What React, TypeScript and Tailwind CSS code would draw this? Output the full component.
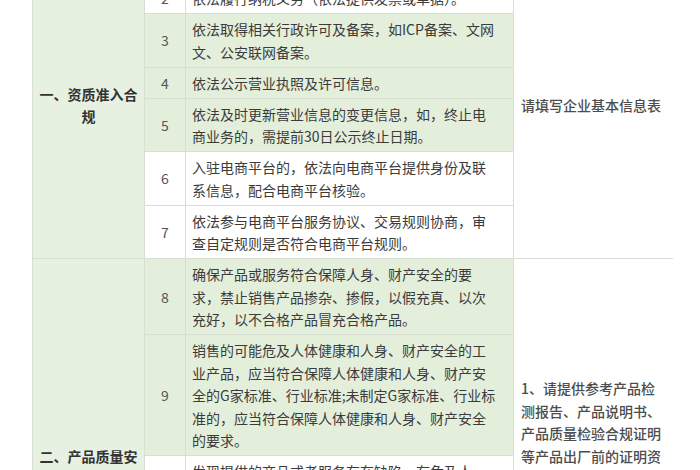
import React from 'react';

type Row = { no: number; lines: string[]; green: boolean };

const sectionOne: Row[] = [
  { no: 1, lines: ['依法办理市场主体登记，取得营业执照。'], green: true },
  { no: 2, lines: ['依法履行纳税义务（依法提供发票或单据）。'], green: false },
  { no: 3, lines: ['依法取得相关行政许可及备案，如ICP备案、文网', '文、公安联网备案。'], green: true },
  { no: 4, lines: ['依法公示营业执照及许可信息。'], green: true },
  { no: 5, lines: ['依法及时更新营业信息的变更信息，如，终止电', '商业务的，需提前30日公示终止日期。'], green: true },
  { no: 6, lines: ['入驻电商平台的，依法向电商平台提供身份及联', '系信息，配合电商平台核验。'], green: false },
  { no: 7, lines: ['依法参与电商平台服务协议、交易规则协商，审', '查自定规则是否符合电商平台规则。'], green: false },
];

const sectionTwo: Row[] = [
  {
    no: 8,
    lines: ['确保产品或服务符合保障人身、财产安全的要', '求，禁止销售产品掺杂、掺假，以假充真、以次', '充好，以不合格产品冒充合格产品。'],
    green: true,
  },
  {
    no: 9,
    lines: [
      '销售的可能危及人体健康和人身、财产安全的工',
      '业产品，应当符合保障人体健康和人身、财产安',
      '全的G家标准、行业标准;未制定G家标准、行业标',
      '准的，应当符合保障人体健康和人身、财产安全',
      '的要求。',
    ],
    green: true,
  },
  {
    no: 10,
    lines: [
      '发现提供的商品或者服务存在缺陷，有危及人',
      '身、财产安全危险的，应当立即停止销售，并',
      '采取召回等措施，及时向有关部门报告和告知',
      '消费者，承担召回所需的必要费用。',
      '',
    ],
    green: false,
  },
  {
    no: 11,
    lines: ['不得销售国家明令淘汰并停止销售的产品和失', '效、变质的产品。', '', ''],
    green: false,
  },
];

const cell = 'border border-[#d6dfd2] pt-[4px] pb-[3.5px] align-middle';

function Section({
  title,
  note,
  rows,
}: {
  title: string[];
  note: string[];
  rows: Row[];
}) {
  return (
    <>
      {rows.map((row, i) => (
        <tr key={row.no}>
          {i === 0 && (
            <td
              rowSpan={rows.length}
              className={`${cell} bg-[#e7f1e1] px-[6px] text-center font-bold text-[#333]`}
            >
              {title.map((t) => (
                <div key={t}>{t}</div>
              ))}
            </td>
          )}
          <td className={`${cell} text-center text-[#555] ${row.green ? 'bg-[#e4efdb]' : 'bg-white'}`}>{row.no}</td>
          <td className={`${cell} pl-[6px] text-[#3b3b3b] ${row.green ? 'bg-[#e4efdb]' : 'bg-white'}`}>
            {row.lines.map((l, k) => (
              <div key={k} className="h-[22.5px] whitespace-nowrap">
                {l}
              </div>
            ))}
          </td>
          {i === 0 && (
            <td
              rowSpan={rows.length}
              className={`${cell} border-r-0 border-r-transparent bg-white pl-[7px] font-medium text-[#4d4d4d]`}
            >
              {note.map((n, k) => (
                <div key={k} className="whitespace-nowrap">
                  {n}
                </div>
              ))}
            </td>
          )}
        </tr>
      ))}
    </>
  );
}

export default function App() {
  return (
    <div
      className="h-[470px] w-[700px] overflow-hidden bg-white text-[14px] leading-[22.5px]"
      style={{ fontFamily: '"Noto Sans CJK SC", "Noto Sans", sans-serif' }}
    >
      <table className="-mt-[49px] ml-[32px] w-[640px] table-fixed border-collapse">
        <colgroup>
          <col className="w-[112px]" />
          <col className="w-[41px]" />
          <col className="w-[328px]" />
          <col className="w-[159px]" />
        </colgroup>
        <tbody>
          <Section title={['一、资质准入合', '规']} note={['请填写企业基本信息表']} rows={sectionOne} />
          <Section
            title={['二、产品质量安', '全']}
            note={[
              '1、请提供参考产品检',
              '测报告、产品说明书、',
              '产品质量检验合规证明',
              '等产品出厂前的证明资',
              '料；',
              '2、请提供产品合格证',
              '明、检验检疫证明等',
              '相关资料。',
            ]}
            rows={sectionTwo}
          />
        </tbody>
      </table>
    </div>
  );
}
